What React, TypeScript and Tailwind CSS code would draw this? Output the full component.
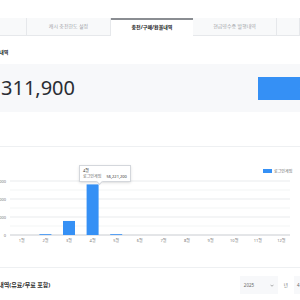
import React from 'react';

const TABS = [
  { label: '', w: 'w-[27px]', active: false },
  { label: '캐시 충전한도 설정', w: 'w-[84px]', active: false },
  { label: '충전/구매/환불내역', w: 'w-[82px]', active: true },
  { label: '현금영수증 발행내역', w: 'w-[84px]', active: false },
  { label: '', w: 'flex-1', active: false },
];

const MONTHS = ['1월', '2월', '3월', '4월', '5월', '6월', '7월', '8월', '9월', '10월', '11월', '12월'];
// monthly amounts in won
const DATA = [0, 120000, 15600000, 56221200, 90000, 0, 0, 0, 0, 0, 0, 0];
const MAX = 60000000;

function Chart() {
  const top = 22;
  const base = 76;
  const h = base - top;
  const x0 = 10;
  const step = 23.6;
  return (
    <div className="relative h-[92px]">
      <svg width="300" height="92" className="block">
        {[0, 1, 2, 3, 4, 5].map(i => (
          <line
            key={i}
            x1={x0}
            x2={290}
            y1={top + i * 9}
            y2={top + i * 9}
            stroke={i % 2 === 0 ? '#e9ebee' : '#f4f5f6'}
            strokeWidth="1.2"
          />
        ))}
        <line x1={x0} x2={290} y1={base} y2={base} stroke="#c9ccd1" strokeWidth="1" />
        {['60,000,000', '40,000,000', '20,000,000', '0'].map((t, i) => (
          <text key={t} x="6" y={top + i * 18 + 1.5} fontSize="4" fill="#777" textAnchor="end">
            {t}
          </text>
        ))}
        {DATA.map((v, i) => {
          const bh = Math.max((v / MAX) * h, v > 0 ? 0.8 : 0);
          const cx = x0 + step * (i + 0.5);
          return (
            <rect key={i} x={cx - 6} y={base - bh} width="12" height={bh} fill="#3590f5" />
          );
        })}
        {MONTHS.map((m, i) => (
          <text key={m} x={x0 + step * (i + 0.5)} y={base + 6.5} fontSize="4" fill="#777" textAnchor="middle">
            {m}
          </text>
        ))}
        <rect x="263" y="10" width="9" height="4" fill="#3590f5" />
        <text x="274" y="13.5" fontSize="4" fill="#666">로그인게임</text>
      </svg>
      <div className="absolute left-[79px] top-[6px] w-[52px] h-[17px] bg-white border border-[#d4d7dc] shadow-sm px-[3px] pt-[2px] text-[4px] leading-[6px] text-[#333]">
        <div>4월</div>
        <div className="flex gap-[5px]">
          <span className="text-[#666]">로그인게임</span>
          <span>56,221,200</span>
        </div>
        <div className="absolute left-[17px] bottom-[-3px] w-[5px] h-[5px] bg-white border-r border-b border-[#d4d7dc] rotate-45" />
      </div>
    </div>
  );
}

export default function App() {
  return (
    <div
      className="w-[300px] h-[300px] overflow-hidden bg-white text-[#222]"
      style={{ fontFamily: '"Noto Sans", "Noto Sans CJK KR", sans-serif' }}
    >
      <div className="pt-[18px]">
        <div className="flex h-[18px]">
          {TABS.map((t, i) => (
            <div
              key={i}
              className={
                t.active
                  ? `${t.w} flex items-center justify-center whitespace-nowrap bg-white border-t-2 border-[#8a8d92] text-[5px] font-bold text-[#222]`
                  : `${t.w} flex items-center justify-center whitespace-nowrap bg-[#f8f9fa] border-b border-r border-[#e6e8eb] text-[5px] text-[#a0a3a8]`
              }
            >
              {t.label}
            </div>
          ))}
        </div>

        <div className="mt-[13px] -ml-[10px] text-[5px] font-bold leading-[6px]">환불내역</div>

        <div className="mt-[9px] h-[48px] bg-[#f7f8fa] flex items-center justify-between">
          <div className="ml-[1px] text-[20px] leading-none text-[#2a2d33]">311,900</div>
          <div className="w-[42px] h-[23px] bg-[#3590f5] flex items-center justify-end text-white text-[6px] font-bold overflow-hidden">
            <span className="-mr-[22px] whitespace-nowrap">충전하기</span>
          </div>
        </div>

        <div className="mt-[34px] h-px bg-[#eef0f2]" />

        <div className="mt-[12px]">
          <Chart />
        </div>

        <div className="mt-[16px] h-px bg-[#eef0f2]" />

        <div className="mt-[8px] flex items-center justify-between">
          <div className="-ml-[28px] text-[6px] font-bold text-[#333] whitespace-nowrap">충전/구매 내역(유료/무료 포함)</div>
          <div className="flex items-center -mr-[14px]">
            <div className="w-[38px] h-[18px] bg-[#f7f8fa] flex items-center justify-between px-[4px] text-[4.5px] text-[#666]">
              <span>2025</span>
              <svg width="4" height="3" viewBox="0 0 8 5">
                <path d="M1 1l3 3 3-3" stroke="#888" strokeWidth="1.4" fill="none" />
              </svg>
            </div>
            <span className="mx-[6px] text-[4.5px] text-[#666]">년</span>
            <div className="w-[20px] h-[18px] bg-[#f7f8fa] flex items-center px-[3px] text-[4.5px] text-[#666]">
              <span>4</span>
            </div>
          </div>
        </div>
      </div>
    </div>
  );
}
